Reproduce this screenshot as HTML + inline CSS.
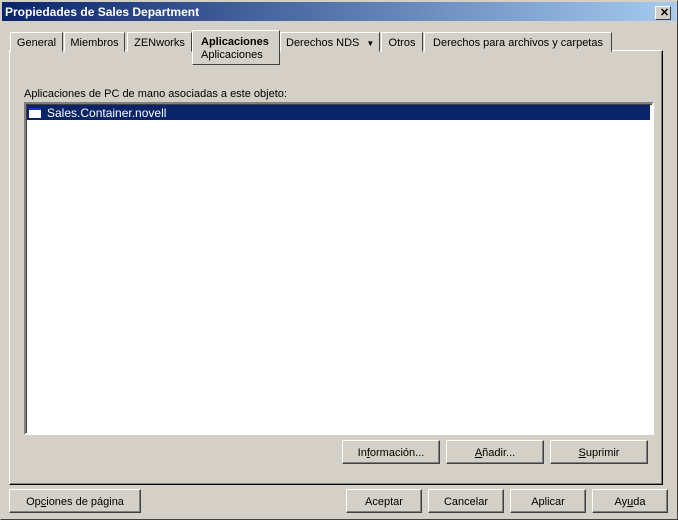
<!DOCTYPE html><html><head><style>
body{margin:0;width:678px;height:520px;background:#d4d0c8;font:11px "Liberation Sans",sans-serif;position:relative;overflow:hidden}
.a{position:absolute}
.win{left:0;top:0;width:676px;height:518px;border:1px solid;border-color:#d4d0c8 #404040 #404040 #d4d0c8}
.title{left:2px;top:2px;width:674px;height:19px;background:linear-gradient(90deg,#0a246a,#a6caf0);color:#fff;font-weight:bold;font-size:12px;line-height:21px;text-indent:3px}
.x{right:5px;top:4px;width:14px;height:12px;background:#d4d0c8;border:1px solid;border-color:#fff #404040 #404040 #fff;color:#000;font:bold 11px/12px "Liberation Sans";text-align:center}
.tab{top:32px;height:18px;border:1px solid;border-color:#fff #404040 transparent #fff;line-height:20px;text-align:center;background:#d4d0c8}
.btn{height:22px;border:1px solid;border-color:#fff #404040 #404040 #fff;box-shadow:inset -1px -1px #808080;line-height:25px;text-align:center;background:#d4d0c8}
u{text-decoration:underline}
</style></head><body>
<div class="a win"></div>
<div class="a title">Propiedades de Sales Department<div class="a x">✕</div></div>
<div class="a" style="left:9px;top:50px;width:652px;height:433px;border:1px solid;border-color:#fff #000 #000 #fff;box-shadow:inset -1px -1px #808080"></div>
<div class="a tab" style="left:10px;width:51px">General</div>
<div class="a tab" style="left:64px;width:59px">Miembros</div>
<div class="a tab" style="left:127px;width:63px">ZENworks</div>
<div class="a tab" style="left:280px;text-align:left;padding-left:5px;width:93px">Derechos NDS <span style="font-size:8px;margin-left:4px">▼</span></div>
<div class="a tab" style="left:381px;width:40px">Otros</div>
<div class="a tab" style="left:424px;width:186px">Derechos para archivos y carpetas</div>
<div class="a" style="left:192px;top:30px;height:35px;border:1px solid;border-color:#fff #404040 #404040 #fff;background:#d4d0c8;padding-left:8px;line-height:13px;box-sizing:border-box;width:88px;padding-top:5px"><b>Aplicaciones</b><br>Aplicaciones</div>
<div class="a" style="left:24px;top:88px">Aplicaciones de PC de mano asociadas a este objeto:</div>
<div class="a" style="left:24px;top:102px;width:626px;height:329px;border:2px solid;border-color:#808080 #fff #fff #808080;background:#fff;box-shadow:inset 1px 1px #404040"></div>
<div class="a" style="left:27px;top:105px;width:623px;height:15px;background:#0a246a;color:#fff;font-size:12px;line-height:17px"><span class="a" style="left:2px;top:3px;width:12px;height:8px;background:#fff;border-top:2px solid #2030c0"></span><span style="margin-left:20px">Sales.Container.novell</span></div>
<div class="a btn" style="left:342px;top:440px;width:96px">In<u>f</u>ormación...</div>
<div class="a btn" style="left:446px;top:440px;width:96px"><u>A</u>ñadir...</div>
<div class="a btn" style="left:550px;top:440px;width:96px"><u>S</u>uprimir</div>
<div class="a btn" style="left:9px;top:489px;width:130px">Op<u>c</u>iones de página</div>
<div class="a btn" style="left:346px;top:489px;width:74px">Aceptar</div>
<div class="a btn" style="left:428px;top:489px;width:74px">Cancelar</div>
<div class="a btn" style="left:510px;top:489px;width:74px">Aplicar</div>
<div class="a btn" style="left:592px;top:489px;width:74px">Ay<u>u</u>da</div>
</body></html>
